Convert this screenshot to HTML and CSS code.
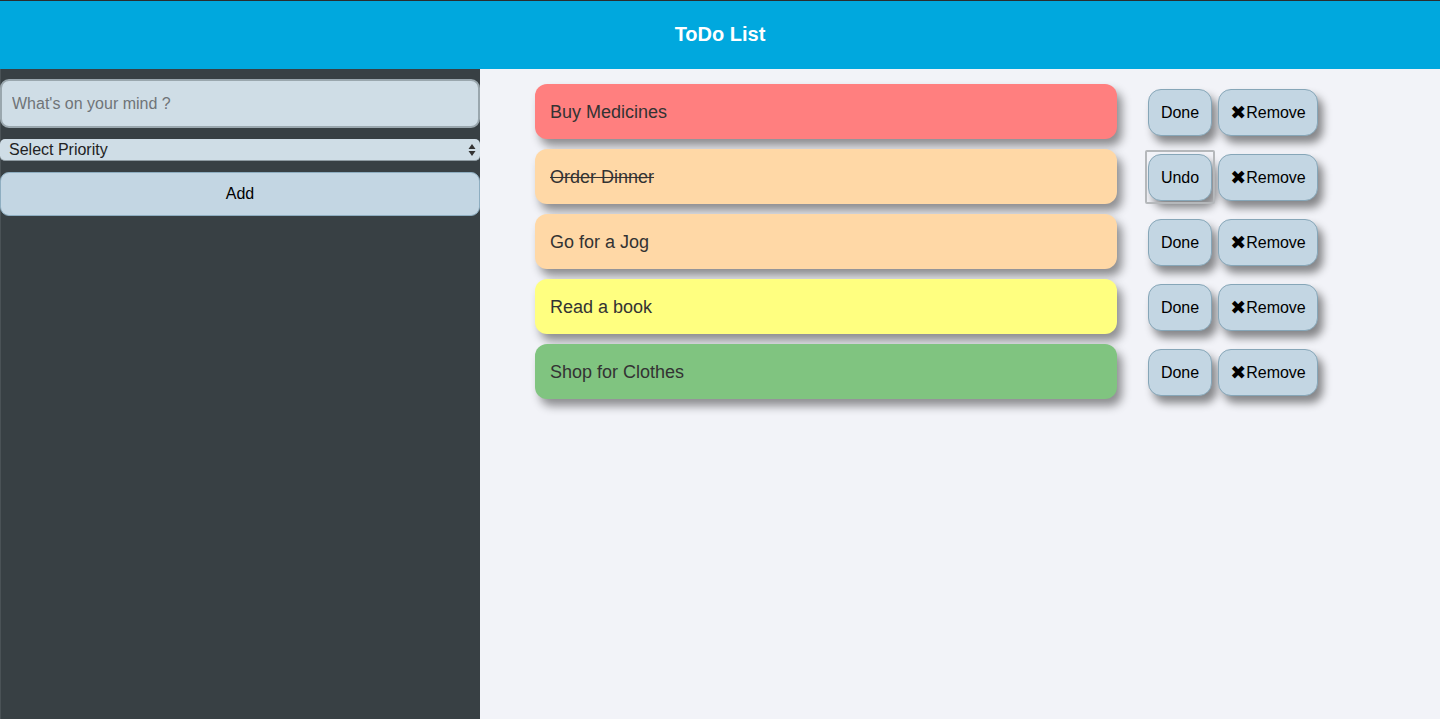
FILE: index.html
```html
<!DOCTYPE html>
<html>
<head>
<meta charset="utf-8">
<title>ToDo List</title>
<link rel="stylesheet" href="styles.css">
</head>
<body>
<div class="app">
  <header class="header">ToDo List</header>
  <div class="body">
    <aside class="sidebar">
      <input class="task-input" type="text" placeholder="What's on your mind ?">
      <div class="select"><span>Select Priority</span><span class="arrows"><svg width="8" height="14" viewBox="0 0 8 14"><path d="M4 1 L7.5 6 L0.5 6 Z M4 13 L7.5 8 L0.5 8 Z" fill="#333"/></svg></span></div>
      <button class="add-btn">Add</button>
    </aside>
    <main class="main">
      <div class="row">
        <div class="item red">Buy Medicines</div>
        <div class="actions"><button class="btn">Done</button><button class="btn remove"><span class="x">✖</span>Remove</button></div>
      </div>
      <div class="row">
        <div class="item peach"><s>Order Dinner</s></div>
        <div class="actions"><button class="btn focused">Undo</button><button class="btn remove"><span class="x">✖</span>Remove</button></div>
      </div>
      <div class="row">
        <div class="item peach">Go for a Jog</div>
        <div class="actions"><button class="btn">Done</button><button class="btn remove"><span class="x">✖</span>Remove</button></div>
      </div>
      <div class="row">
        <div class="item yellow">Read a book</div>
        <div class="actions"><button class="btn">Done</button><button class="btn remove"><span class="x">✖</span>Remove</button></div>
      </div>
      <div class="row">
        <div class="item green">Shop for Clothes</div>
        <div class="actions"><button class="btn">Done</button><button class="btn remove"><span class="x">✖</span>Remove</button></div>
      </div>
    </main>
  </div>
</div>
</body>
</html>
```
FILE: styles.css
```css
* { box-sizing: border-box; }
html, body { margin: 0; padding: 0; height: 100%; }
body {
  font-family: "Liberation Sans", Arial, sans-serif;
  background: #f2f3f8;
  overflow: hidden;
}
.app { display: flex; flex-direction: column; height: 719px; }
.header {
  height: 69px;
  flex: none;
  background: #00a8de;
  border-top: 1px solid #2a2d30;
  color: #fff;
  font-weight: bold;
  font-size: 20px;
  display: flex;
  align-items: center;
  justify-content: center;
  padding-bottom: 2px;
}
.body { flex: 1; display: flex; }
.sidebar {
  width: 480px;
  flex: none;
  background: #384044;
  border-left: 1px solid #4a5256;
  padding-top: 10px;
  display: flex;
  flex-direction: column;
}
.task-input {
  height: 49px;
  width: 480px;
  margin-left: -1px;
  border: 2px solid #9aa7ae;
  border-radius: 9px;
  background: #cfdde6;
  font-family: inherit;
  font-size: 16px;
  padding: 0 10px;
  color: #333;
  outline: none;
}
.task-input::placeholder { color: #6f7478; }
.select {
  margin-top: 11px;
  margin-left: -1px;
  height: 22px;
  width: 480px;
  background: #cfdde6;
  border-radius: 5px;
  border-bottom: 1px solid #8e9aa1;
  display: flex;
  align-items: center;
  justify-content: space-between;
  padding: 0 4px 0 9px;
  font-size: 16px;
  color: #222;
}
.arrows { display: flex; align-items: center; }
.add-btn {
  margin-top: 11px;
  margin-left: -1px;
  width: 480px;
  height: 44px;
  background: #c3d6e3;
  border: 1px solid #8eaec1;
  border-radius: 9px;
  font-family: inherit;
  font-size: 16px;
  color: #000;
}
.main {
  flex: 1;
  padding: 15px 0 0 55px;
  display: flex;
  flex-direction: column;
  gap: 10px;
}
.row { display: flex; align-items: center; }
.item {
  width: 582px;
  height: 55px;
  border-radius: 12px;
  display: flex;
  align-items: center;
  padding: 2px 0 0 15px;
  font-size: 18px;
  color: #333;
  box-shadow: 5px 7px 10px rgba(0,0,0,0.42);
}
.item s { text-decoration-thickness: 1px; }
.red { background: #ff7f7f; }
.peach { background: #ffd8a6; }
.yellow { background: #ffff80; }
.green { background: #80c480; }
.actions {
  display: flex;
  gap: 6px;
  margin-left: 31px;
  margin-top: 2px;
}
.btn {
  position: relative;
  height: 47px;
  width: 64px;
  background: #c3d6e3;
  border: 1px solid #86a6b8;
  border-radius: 13px;
  font-family: inherit;
  font-size: 16px;
  color: #000;
  padding: 0;
  box-shadow: 5px 7px 9px rgba(0,0,0,0.45);
}
.btn.remove { width: 100px; }
.btn .x {
  font-family: "DejaVu Sans", sans-serif;
  font-size: 19px;
  line-height: 16px;
  vertical-align: top;
  margin-right: 0;
}
.btn.focused { outline: none; }
.btn.focused::after {
  content: "";
  position: absolute;
  left: -4px;
  top: -5px;
  right: -4px;
  bottom: -4px;
  border: 2px solid #b5b8bb;
  border-radius: 2px;
  pointer-events: none;
}
```
